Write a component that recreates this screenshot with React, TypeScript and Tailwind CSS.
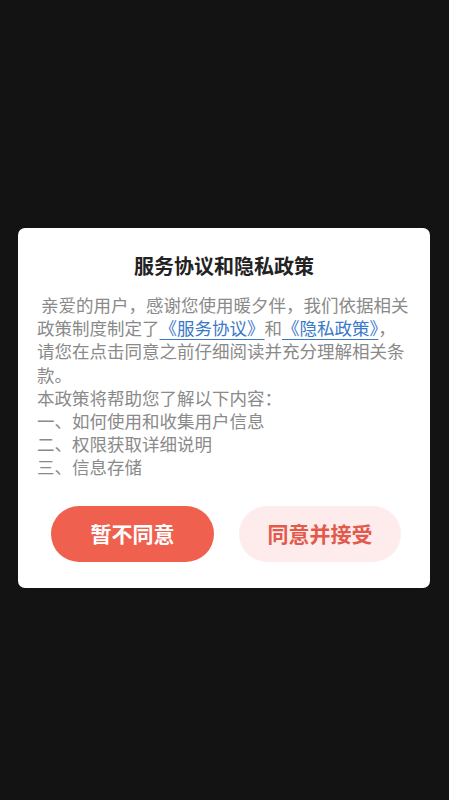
export default function App() {
  return (
    <div
      className="min-h-screen w-full bg-[#131313] pt-[228px]"
      style={{ fontFamily: '"Noto Sans CJK SC", "Noto Sans", sans-serif' }}
    >
      <div className="mx-[18px] w-[412px] rounded-[7px] bg-white pt-[25px] pb-[26px]">
        <h2 className="text-center text-[20px] font-bold leading-[26px] text-[#222222]">
          服务协议和隐私政策
        </h2>

        <div className="mt-[14px] px-[19px] text-[17.5px] leading-[23.2px] text-[#8a8a8a]">
          <p className="indent-[4px]">
            亲爱的用户，感谢您使用暖夕伴，我们依据相关政策制度制定了
            <span className="text-[#3a78c9] underline underline-offset-[4px] decoration-[1px]">《服务协议》</span>
            和
            <span className="text-[#3a78c9] underline underline-offset-[4px] decoration-[1px]">《隐私政策》</span>
            ，请您在点击同意之前仔细阅读并充分理解相关条款。
          </p>
          <p>本政策将帮助您了解以下内容：</p>
          <p>一、如何使用和收集用户信息</p>
          <p>二、权限获取详细说明</p>
          <p>三、信息存储</p>
        </div>

        <div className="mt-[27px] flex justify-between pl-[33px] pr-[29px]">
          <button className="h-[56px] w-[163px] rounded-full bg-[#f0604f] text-[21px] font-bold text-white">
            暂不同意
          </button>
          <button className="h-[56px] w-[162px] rounded-full bg-[#fdeceb] text-[21px] font-bold text-[#e3594b]">
            同意并接受
          </button>
        </div>
      </div>
    </div>
  );
}
